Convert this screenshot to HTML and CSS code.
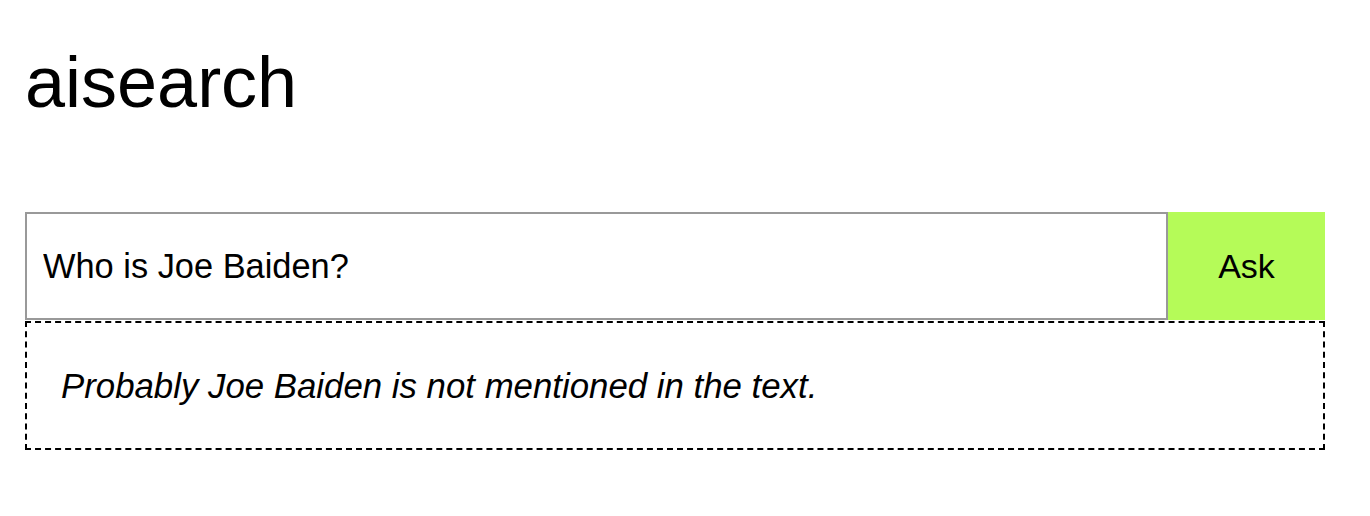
FILE: index.html
```html
<!DOCTYPE html>
<html lang="en">
<head>
<meta charset="utf-8">
<title>aisearch</title>
<link rel="stylesheet" href="styles.css">
</head>
<body>
<main class="page">
  <h1 class="title">aisearch</h1>
  <form class="ask-form">
    <input class="question" type="text" value="Who is Joe Baiden?">
    <button class="ask-btn" type="button">Ask</button>
  </form>
  <div class="answer"><em>Probably Joe Baiden is not mentioned in the text.</em></div>
</main>
</body>
</html>
```

FILE: styles.css
```css
html, body {
  margin: 0;
  padding: 0;
  background: #fff;
  color: #000;
  font-family: "Liberation Sans", Arial, Helvetica, sans-serif;
}

.page {
  width: 1300px;
  padding: 42px 0 0 25px;
}

.title {
  margin: 0;
  font-size: 72px;
  line-height: 80px;
  font-weight: normal;
}

.ask-form {
  display: flex;
  margin: 90px 0 0 0;
  height: 108px;
}

.question {
  flex: 1;
  box-sizing: border-box;
  height: 108px;
  margin: 0;
  border: 2px solid #999;
  padding: 0 0 0 16px;
  font-family: inherit;
  font-size: 34.4px;
  color: #000;
  outline: none;
}

.ask-btn {
  width: 157px;
  height: 108px;
  margin: 0;
  border: none;
  background: #b5fb58;
  font-family: inherit;
  font-size: 34px;
  color: #000;
  padding: 0;
}

.answer {
  margin-top: 1px;
  border: 2px dashed #000;
  padding: 43px 34px 43px;
  font-size: 34.8px;
  line-height: 39px;
}
```
